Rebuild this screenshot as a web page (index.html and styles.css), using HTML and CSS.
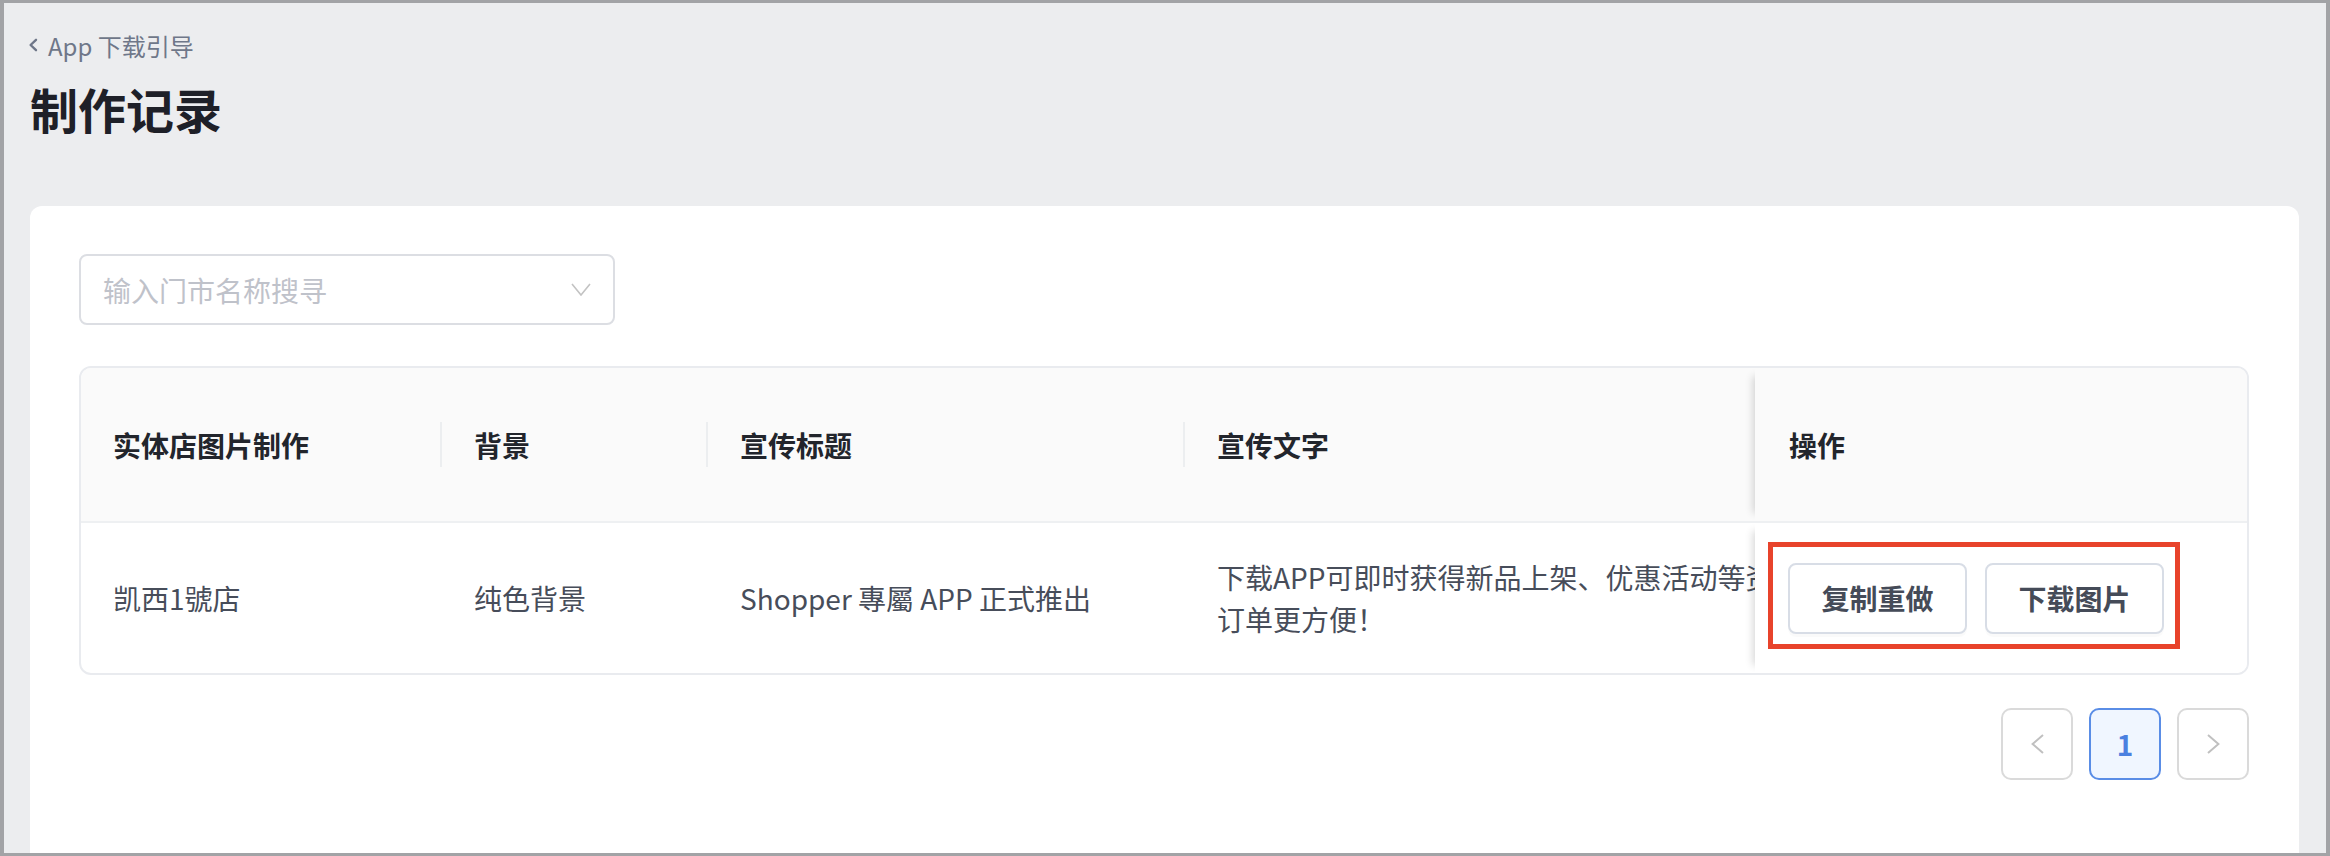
FILE: index.html
```html
<!DOCTYPE html>
<html lang="zh-CN">

<head>
    <meta charset="UTF-8">
    <title>制作记录</title>
    <link rel="stylesheet" href="styles.css">
</head>

<body>
    <div class="frame">
        <div class="page">
            <a class="crumb">
                <svg class="crumb-icon" width="10" height="14" viewBox="0 0 10 14">
                    <path d="M8 1.8 L2.6 7 L8 12.2" fill="none" stroke="currentColor" stroke-width="2.4" stroke-linecap="round" stroke-linejoin="round"/>
                </svg>
                <span>App 下载引导</span>
            </a>
            <h1 class="title">制作记录</h1>

            <div class="card">
                <!-- 门市搜索 -->
                <div class="select">
                    <span class="placeholder">输入门市名称搜寻</span>
                    <svg width="20" height="13" viewBox="0 0 20 13">
                        <path d="M1 1 L10 12 L19 1" fill="none" stroke="#c3c3c3" stroke-width="1.6"/>
                    </svg>
                </div>

                <!-- 记录表格 -->
                <div class="table">
                    <div class="row head">
                        <div class="cell"><span>实体店图片制作</span><i class="sep"></i></div>
                        <div class="cell"><span>背景</span><i class="sep"></i></div>
                        <div class="cell"><span>宣传标题</span><i class="sep"></i></div>
                        <div class="cell"><span>宣传文字</span></div>
                        <div class="cell fixed"><span>操作</span></div>
                    </div>
                    <div class="row item">
                        <div class="cell">凯西1號店</div>
                        <div class="cell">纯色背景</div>
                        <div class="cell">Shopper 專屬 APP 正式推出</div>
                        <div class="cell"><p class="wide">下载APP可即时获得新品上架、优惠活动等资讯，订单更方便！</p></div>
                        <div class="cell fixed">
                            <div class="actions">
                                <button class="btn">复制重做</button>
                                <button class="btn">下载图片</button>
                            </div>
                            <div class="mark"></div>
                        </div>
                    </div>
                </div>

                <!-- 分页 -->
                <div class="pager">
                    <div class="page-btn off">
                        <svg width="13" height="20" viewBox="0 0 13 20">
                            <path d="M12 1 L1.6 10 L12 19" fill="none" stroke="currentColor" stroke-width="2"/>
                        </svg>
                    </div>
                    <div class="page-btn on">1</div>
                    <div class="page-btn off">
                        <svg width="13" height="20" viewBox="0 0 13 20">
                            <path d="M1 1 L11.4 10 L1 19" fill="none" stroke="currentColor" stroke-width="2"/>
                        </svg>
                    </div>
                </div>
            </div>
        </div>
    </div>
</body>

</html>
```

FILE: styles.css
```css
* {
    box-sizing: border-box;
}

body {
    margin: 0;
    font-family: "Noto Sans CJK SC", "Noto Sans", sans-serif;
}

.frame {
    width: 2330px;
    height: 856px;
    border: solid #a2a3a6;
    border-width: 3px 4px;
    background: #ecedef;
    overflow: hidden;
}

.page {
    padding: 24px 27px 0 26px;
}

/* 面包屑 */
.crumb {
    display: flex;
    align-items: center;
    gap: 10px;
    height: 36px;
    margin-left: -2px;
    font-size: 24px;
    color: #6f7789;
}

.title {
    margin: 13px 0 0;
    font-size: 48px;
    line-height: 64px;
    font-weight: 700;
    color: #1e2028;
}

.card {
    margin-top: 66px;
    height: 720px;
    padding: 48px 50px 0 49px;
    background: #fff;
    border-radius: 12px;
}

.select {
    display: flex;
    align-items: center;
    justify-content: space-between;
    width: 536px;
    height: 71px;
    padding: 0 22px;
    border: 2px solid #dcdee3;
    border-radius: 8px;
}

.placeholder {
    font-size: 28px;
    color: #bfc2ca;
}

/* 表格 */
.table {
    margin-top: 41px;
    border: 2px solid #e9ebef;
    border-radius: 12px;
    overflow: hidden;
}

.row {
    display: grid;
    grid-template-columns: 361px 266px 477px 570px 1fr;
}

.head {
    height: 155px;
    background: #fafafa;
    border-bottom: 2px solid #eef0f2;
}

.item {
    height: 150px;
}

.cell {
    display: flex;
    align-items: center;
    min-width: 0;
    padding-left: 32px;
    font-size: 28px;
    color: #474d5a;
}

.head .cell {
    justify-content: space-between;
    font-weight: 600;
    color: #22252c;
}

.sep {
    width: 2px;
    height: 45px;
    background: #eceef0;
}

.wide {
    flex: none;
    width: 630px;
    margin: 0;
    line-height: 42px;
}

/* 固定列 */
.fixed {
    position: relative;
    padding-left: 34px;
    box-shadow: -10px 0 8px -8px rgba(0, 0, 0, 0.16);
}

.head .fixed {
    background: #fafafa;
}

.item .fixed {
    background: #fff;
}

.actions {
    display: flex;
    gap: 18px;
    margin-left: -1px;
}

.btn {
    width: 179px;
    height: 71px;
    border: 2px solid #d8dde6;
    border-radius: 8px;
    background: #fff;
    box-shadow: 0 3px 0 rgba(0, 0, 0, 0.02);
    font: inherit;
    font-weight: 600;
    color: #454b58;
}

/* 标注框 */
.mark {
    position: absolute;
    left: 13px;
    top: 19px;
    width: 412px;
    height: 107px;
    border: 5px solid #e8432b;
}

/* 分页 */
.pager {
    display: flex;
    justify-content: flex-end;
    gap: 16px;
    margin-top: 33px;
}

.page-btn {
    display: flex;
    align-items: center;
    justify-content: center;
    width: 72px;
    height: 72px;
    border: 2px solid #dadada;
    border-radius: 10px;
    font-size: 28px;
}

.page-btn.off {
    color: #c0c0c0;
}

.page-btn.on {
    border-color: #5a8de6;
    background: #f0f6ff;
    color: #4a80e0;
    font-weight: 600;
}
```
